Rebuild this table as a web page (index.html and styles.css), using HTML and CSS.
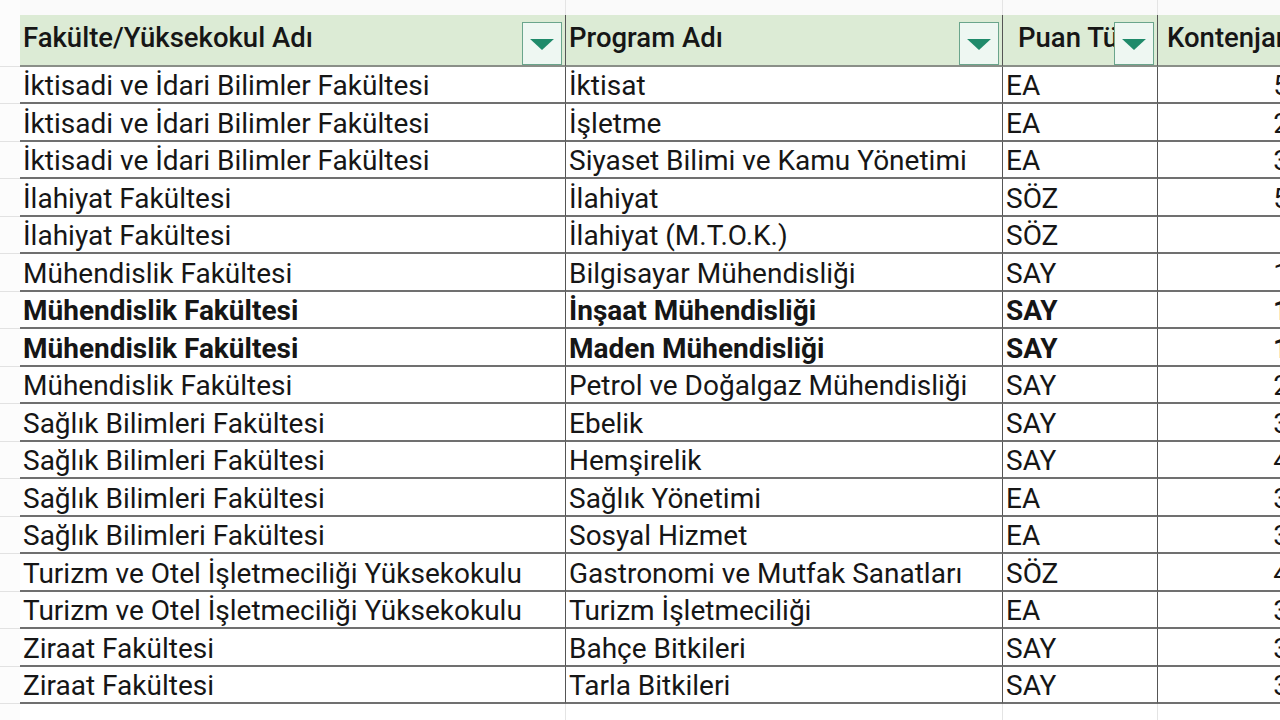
FILE: index.html
```html
<!DOCTYPE html>
<html lang="tr">
<head>
<meta charset="utf-8">
<title>Tablo</title>
<link rel="stylesheet" href="styles.css">
</head>
<body>
<div class="sheet">
  <div class="row top">
    <div class="gut"></div><div class="c"></div><div class="c"></div><div class="c"></div><div class="c"></div>
  </div>
  <div class="row head">
    <div class="gut"></div>
    <div class="c h">Fakülte/Yüksekokul Adı<span class="dd"><svg viewBox="0 0 24 12" width="26" height="13"><path d="M1 1h22L12 11z" fill="#1f8a6a"/></svg></span></div>
    <div class="c h">Program Adı<span class="dd"><svg viewBox="0 0 24 12" width="26" height="13"><path d="M1 1h22L12 11z" fill="#1f8a6a"/></svg></span></div>
    <div class="c h pt">Puan Türü<span class="dd"><svg viewBox="0 0 24 12" width="26" height="13"><path d="M1 1h22L12 11z" fill="#1f8a6a"/></svg></span></div>
    <div class="c h">Kontenjan</div>
  </div>
  <div class="row"><div class="gut"></div><div class="c">İktisadi ve İdari Bilimler Fakültesi</div><div class="c">İktisat</div><div class="c">EA</div><div class="c n">5</div></div>
  <div class="row"><div class="gut"></div><div class="c">İktisadi ve İdari Bilimler Fakültesi</div><div class="c">İşletme</div><div class="c">EA</div><div class="c n">2</div></div>
  <div class="row"><div class="gut"></div><div class="c">İktisadi ve İdari Bilimler Fakültesi</div><div class="c">Siyaset Bilimi ve Kamu Yönetimi</div><div class="c">EA</div><div class="c n">3</div></div>
  <div class="row"><div class="gut"></div><div class="c">İlahiyat Fakültesi</div><div class="c">İlahiyat</div><div class="c">SÖZ</div><div class="c n">5</div></div>
  <div class="row"><div class="gut"></div><div class="c">İlahiyat Fakültesi</div><div class="c">İlahiyat (M.T.O.K.)</div><div class="c">SÖZ</div><div class="c n"></div></div>
  <div class="row"><div class="gut"></div><div class="c">Mühendislik Fakültesi</div><div class="c">Bilgisayar Mühendisliği</div><div class="c">SAY</div><div class="c n">1</div></div>
  <div class="row bold"><div class="gut"></div><div class="c">Mühendislik Fakültesi</div><div class="c">İnşaat Mühendisliği</div><div class="c">SAY</div><div class="c n">1</div></div>
  <div class="row bold"><div class="gut"></div><div class="c">Mühendislik Fakültesi</div><div class="c">Maden Mühendisliği</div><div class="c">SAY</div><div class="c n">1</div></div>
  <div class="row"><div class="gut"></div><div class="c">Mühendislik Fakültesi</div><div class="c">Petrol ve Doğalgaz Mühendisliği</div><div class="c">SAY</div><div class="c n">2</div></div>
  <div class="row"><div class="gut"></div><div class="c">Sağlık Bilimleri Fakültesi</div><div class="c">Ebelik</div><div class="c">SAY</div><div class="c n">3</div></div>
  <div class="row"><div class="gut"></div><div class="c">Sağlık Bilimleri Fakültesi</div><div class="c">Hemşirelik</div><div class="c">SAY</div><div class="c n">4</div></div>
  <div class="row"><div class="gut"></div><div class="c">Sağlık Bilimleri Fakültesi</div><div class="c">Sağlık Yönetimi</div><div class="c">EA</div><div class="c n">3</div></div>
  <div class="row"><div class="gut"></div><div class="c">Sağlık Bilimleri Fakültesi</div><div class="c">Sosyal Hizmet</div><div class="c">EA</div><div class="c n">3</div></div>
  <div class="row"><div class="gut"></div><div class="c">Turizm ve Otel İşletmeciliği Yüksekokulu</div><div class="c">Gastronomi ve Mutfak Sanatları</div><div class="c">SÖZ</div><div class="c n">4</div></div>
  <div class="row"><div class="gut"></div><div class="c">Turizm ve Otel İşletmeciliği Yüksekokulu</div><div class="c">Turizm İşletmeciliği</div><div class="c">EA</div><div class="c n">3</div></div>
  <div class="row"><div class="gut"></div><div class="c">Ziraat Fakültesi</div><div class="c">Bahçe Bitkileri</div><div class="c">SAY</div><div class="c n">3</div></div>
  <div class="row"><div class="gut"></div><div class="c">Ziraat Fakültesi</div><div class="c">Tarla Bitkileri</div><div class="c">SAY</div><div class="c n">3</div></div>
  <div class="row empty"><div class="gut"></div><div class="c"></div><div class="c"></div><div class="c"></div><div class="c"></div></div>
</div>
</body>
</html>
```
FILE: styles.css
```css
html, body {
  margin: 0;
  padding: 0;
  background: #ffffff;
  overflow: hidden;
}
.sheet {
  width: 1290px;
  font-family: Roboto, "Noto Sans", "Liberation Sans", sans-serif;
  font-size: 28px;
  color: #161616;
}
.row {
  display: grid;
  grid-template-columns: 20px 546px 437px 155px 132px;
  height: 37.5px;
}
.gut {
  border-bottom: 1px solid #e2e2e2;
  background: #fcfcfc;
}
.c {
  position: relative;
  box-sizing: border-box;
  border-bottom: 2px solid #707070;
  border-right: 1.5px solid #555555;
  padding: 4px 4px 0 3px;
  display: flex;
  align-items: center;
  white-space: nowrap;
  overflow: hidden;
  line-height: 1;
}
.c.n {
  justify-content: flex-end;
  padding-right: 0;
}
.row.bold .c {
  font-weight: 700;
}
.row.top {
  height: 15px;
}
.row.top .c {
  background: #fafafa;
  border-bottom: none;
  border-right: 1px solid #e4e4e4;
}
.row.top .gut {
  border-bottom: none;
}
.row.head {
  height: 51.5px;
}
.row.head .c {
  background: #dcebd5;
  font-weight: 500;
  font-size: 27.5px;
  overflow: visible;
  padding-top: 0;
  padding-bottom: 4px;
  border-bottom-color: #8a8f88;
}
.row.head .c.pt {
  padding-left: 15px;
  overflow: hidden;
}
.row.head .c:last-child {
  padding-left: 9px;
}
.dd {
  position: absolute;
  right: 3px;
  top: 7px;
  bottom: 0;
  width: 40px;
  box-sizing: border-box;
  border: 1.5px solid #6aa58c;
  background: #eef7f2;
  display: flex;
  align-items: center;
  justify-content: center;
  padding-top: 2px;
}
.row.empty .c {
  border-bottom: 1px solid #eeeeee;
  border-right: 1px solid #e4e4e4;
}
```
